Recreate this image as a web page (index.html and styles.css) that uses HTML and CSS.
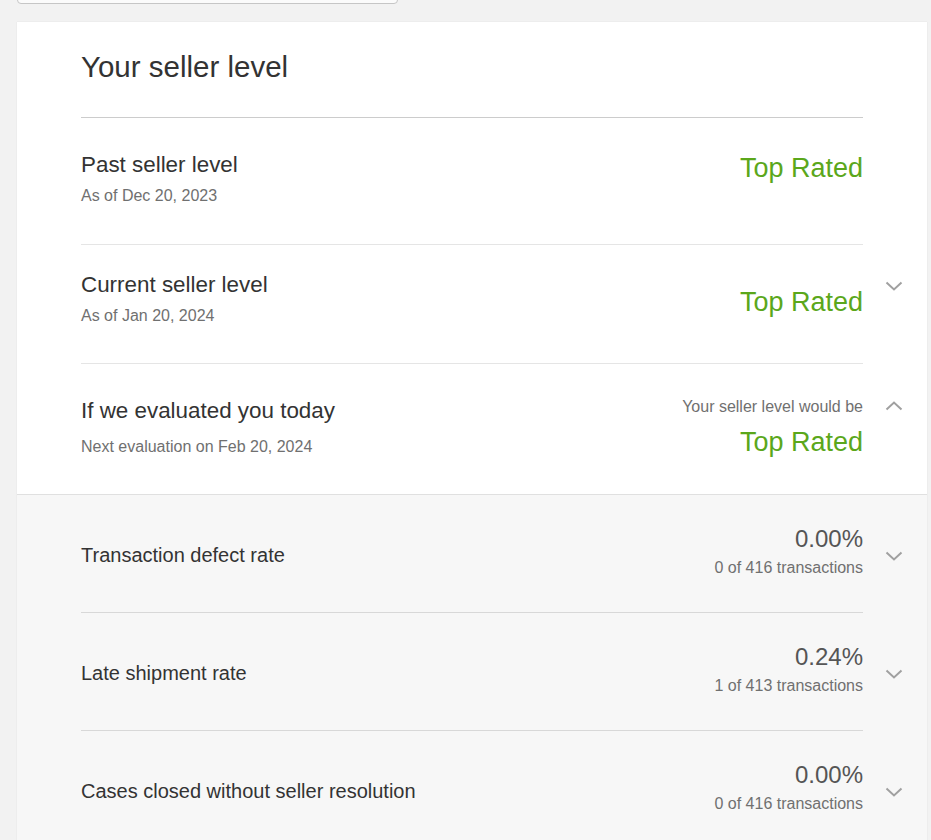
FILE: index.html
```html
<!DOCTYPE html>
<html lang="en">
<head>
<meta charset="utf-8">
<title>Your seller level</title>
<link rel="stylesheet" href="styles.css">
</head>
<body>
<div class="topbox"></div>
<section class="card">
  <header class="card-head">
    <h1 class="card-title">Your seller level</h1>
  </header>

  <div class="levels">
    <div class="row row-past">
      <div class="left">
        <div class="row-title">Past seller level</div>
        <div class="row-sub">As of Dec 20, 2023</div>
      </div>
      <div class="right">
        <div class="level">Top Rated</div>
      </div>
    </div>

    <div class="row row-current">
      <div class="left">
        <div class="row-title">Current seller level</div>
        <div class="row-sub">As of Jan 20, 2024</div>
      </div>
      <div class="right">
        <div class="level level-current">Top Rated</div>
        <svg class="chev chev-current" width="18" height="10" viewBox="0 0 18 10"><polyline points="1.5,1.5 9,8.5 16.5,1.5" fill="none" stroke="#a0a0a0" stroke-width="2"/></svg>
      </div>
    </div>

    <div class="row row-today">
      <div class="left">
        <div class="row-title">If we evaluated you today</div>
        <div class="row-sub sub-today">Next evaluation on Feb 20, 2024</div>
      </div>
      <div class="right">
        <div class="value-block value-today">
          <div class="would-be">Your seller level would be</div>
          <div class="level level-today">Top Rated</div>
        </div>
        <svg class="chev chev-today" width="18" height="10" viewBox="0 0 18 10"><polyline points="1.5,8.5 9,1.5 16.5,8.5" fill="none" stroke="#a0a0a0" stroke-width="2"/></svg>
      </div>
    </div>
  </div>

  <div class="metrics">
    <div class="row mrow">
      <div class="mlabel">Transaction defect rate</div>
      <div class="right">
        <div class="value-block">
          <div class="stat">0.00%</div>
          <div class="stat-sub">0 of 416 transactions</div>
        </div>
        <svg class="chev chev-metric" width="18" height="10" viewBox="0 0 18 10"><polyline points="1.5,1.5 9,8.5 16.5,1.5" fill="none" stroke="#a0a0a0" stroke-width="2"/></svg>
      </div>
    </div>
    <div class="row mrow">
      <div class="mlabel">Late shipment rate</div>
      <div class="right">
        <div class="value-block">
          <div class="stat">0.24%</div>
          <div class="stat-sub">1 of 413 transactions</div>
        </div>
        <svg class="chev chev-metric" width="18" height="10" viewBox="0 0 18 10"><polyline points="1.5,1.5 9,8.5 16.5,1.5" fill="none" stroke="#a0a0a0" stroke-width="2"/></svg>
      </div>
    </div>
    <div class="row mrow mrow-last">
      <div class="mlabel">Cases closed without seller resolution</div>
      <div class="right">
        <div class="value-block">
          <div class="stat">0.00%</div>
          <div class="stat-sub">0 of 416 transactions</div>
        </div>
        <svg class="chev chev-metric" width="18" height="10" viewBox="0 0 18 10"><polyline points="1.5,1.5 9,8.5 16.5,1.5" fill="none" stroke="#a0a0a0" stroke-width="2"/></svg>
      </div>
    </div>
  </div>
</section>
</body>
</html>
```

FILE: styles.css
```css
* { box-sizing: border-box; }

html, body {
  margin: 0;
  padding: 0;
}

body {
  background: #f2f2f2;
  font-family: "Liberation Sans", Arial, sans-serif;
  color: #333333;
  overflow: hidden;
}

.topbox {
  width: 381px;
  height: 40px;
  margin: -36px 0 0 17px;
  background: #fbfbfb;
  border: 1px solid #c6c6c6;
  border-radius: 4px;
}

.card {
  width: 910px;
  margin: 18px 0 0 17px;
  background: #ffffff;
  box-shadow: 0 0 1px rgba(0, 0, 0, 0.12);
}

.card-head {
  margin: 0 64px;
  padding: 27px 0 32px;
  border-bottom: 1px solid #cccccc;
}

.card-title {
  margin: 0;
  font-size: 29.5px;
  line-height: 36px;
  font-weight: normal;
  color: #333333;
}

.levels {
  padding: 0 64px;
}

.row {
  display: flex;
  justify-content: space-between;
  align-items: flex-start;
  border-bottom: 1px solid #e5e5e5;
}

.row-past { padding: 34px 0 38px; }
.row-current { padding: 27px 0 37px; }
.row-today { padding: 34px 0 36px; border-bottom: 0; }

.row-title {
  font-size: 22.4px;
  line-height: 26px;
  color: #333333;
}

.row-sub {
  margin-top: 8px;
  font-size: 16px;
  line-height: 20px;
  color: #707070;
}

.sub-today { margin-top: 13px; }

.right {
  display: flex;
  align-items: flex-start;
}

.value-block {
  display: flex;
  flex-direction: column;
  align-items: flex-end;
}

.value-today { margin-top: -1px; }

.level {
  font-size: 27px;
  line-height: 32px;
  color: #5ba71b;
}

.level-current { margin-top: 14px; }

.would-be {
  font-size: 16px;
  line-height: 20px;
  color: #707070;
}

.level-today { margin-top: 9px; }

.chev {
  display: block;
  flex: none;
  margin-left: 22px;
  margin-right: -40px;
}

.chev-current { margin-top: 9px; }
.chev-today { margin-top: 3px; }
.chev-metric { margin-top: 26px; }

.metrics {
  background: #f7f7f7;
  border-top: 1px solid #e0e0e0;
  padding: 0 64px;
}

.mrow {
  padding: 30px 0 34px;
  border-bottom: 1px solid #d8d8d8;
}

.mrow-last { border-bottom: 0; }

.mlabel {
  margin-top: 18px;
  font-size: 20px;
  line-height: 24px;
  color: #333333;
}

.stat {
  font-size: 24px;
  line-height: 28px;
  color: #555555;
}

.stat-sub {
  margin-top: 5px;
  font-size: 16px;
  line-height: 20px;
  color: #707070;
}
```
